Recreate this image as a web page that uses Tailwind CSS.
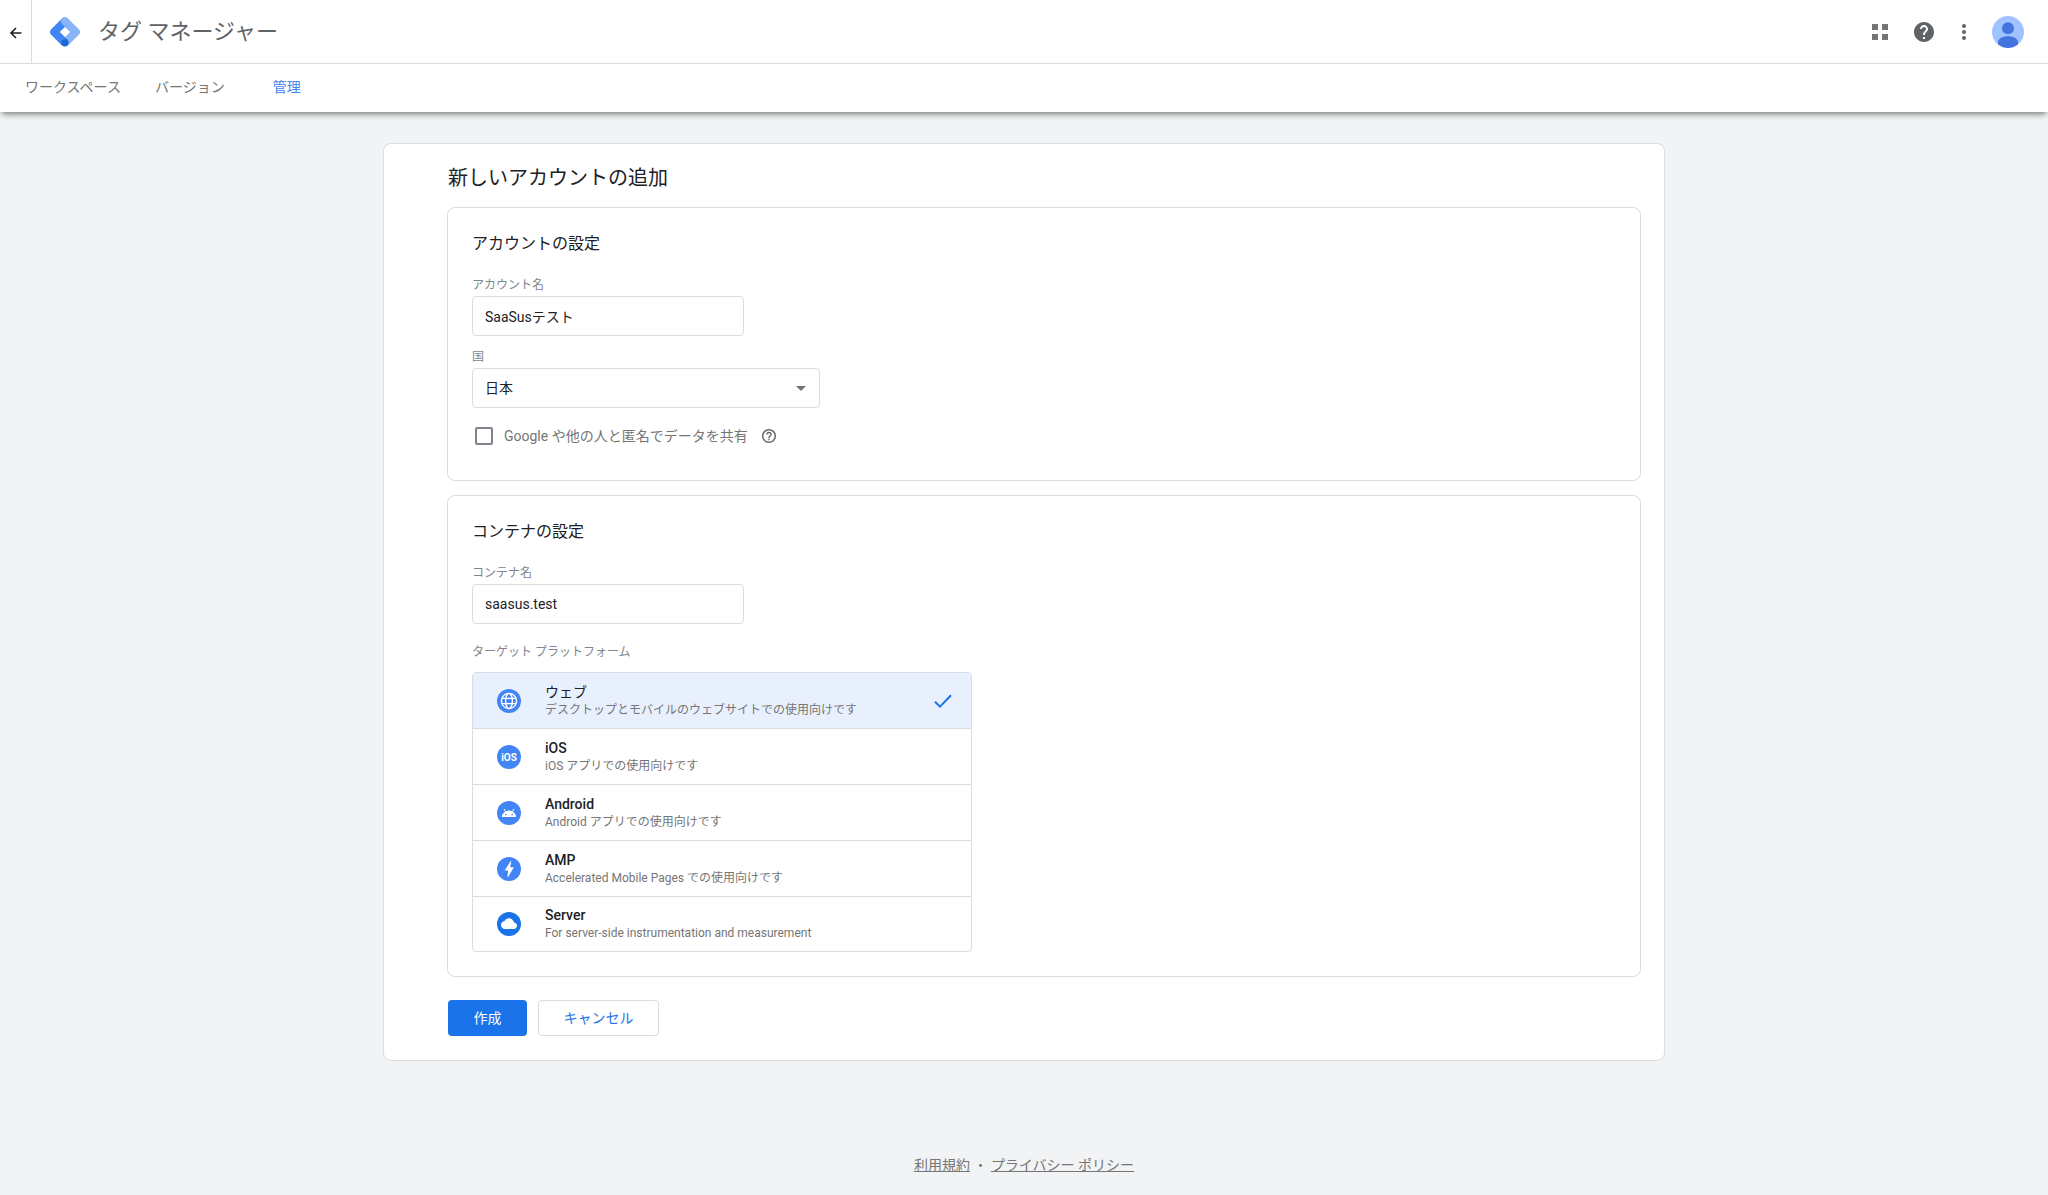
<!DOCTYPE html>
<html lang="ja">
<head>
<meta charset="utf-8">
<meta name="viewport" content="width=device-width, initial-scale=1">
<title>タグ マネージャー</title>
<script src="https://cdn.jsdelivr.net/npm/@tailwindcss/browser@4"></script>
</head>
<body class="flex min-h-screen flex-col bg-[#f1f3f4] font-['Roboto','Noto_Sans_CJK_JP',sans-serif] text-sm text-[#202124]">

<div class="relative bg-white shadow-[0_4px_6px_-2px_rgba(0,0,0,0.5)]">
  <header class="flex h-16 items-center border-b border-[#dadce0]">
    <button type="button" aria-label="戻る" class="flex h-full w-8 items-center justify-center border-r border-[#dadce0] pt-0.5">
      <svg class="size-4" viewBox="0 0 16 16" fill="none" stroke="#202124" stroke-width="1.6"><path d="M13.5 8H3.2M8 3 3 8l5 5"/></svg>
    </button>
    <a href="#" class="ml-[18px] flex items-center gap-[18px] text-[22px] leading-8 text-[#5f6368]">
      <svg class="size-[30px]" viewBox="0 0 30 30">
        <path fill="#8ab4f8" d="M12 1.4a4 4 0 0 1 5.8 0L28.8 12.2a4 4 0 0 1 0 5.6L18 28.6l-5.7-5.8L20.2 15 12 6.9z"/>
        <path fill="#4285f4" d="M12.2 1.2 1.2 12.2a4 4 0 0 0 0 5.6l10.9 10.9 5.6-5.9L9.8 15l8-7.8z"/>
        <path fill="#8ab4f8" d="M12 1.4a4 4 0 0 1 5.8 0l3 3-3 2.8-2.8 2.8-3-3.2a4 4 0 0 1 0-5.4z"/>
        <circle cx="15" cy="25.8" r="3.6" fill="#1967d2"/>
      </svg>
      <span>タグ マネージャー</span>
    </a>
    <div class="ml-auto flex items-center pr-6">
      <button type="button" aria-label="アプリ" class="mr-[26px]">
        <svg class="size-4" viewBox="0 0 16 16" fill="#757575"><path d="M0 0h6v6H0zM10 0h6v6h-6zM0 10h6v6H0zM10 10h6v6h-6z"/></svg>
      </button>
      <button type="button" aria-label="ヘルプ" class="mr-[18px]">
        <svg class="size-5" viewBox="2 2 20 20" fill="#5f6368"><path d="M12 2C6.480 2 2 6.480 2 12s4.480 10 10 10 10-4.480 10-10S17.520 2 12 2zm1 17h-2v-2h2v2zm2.070-7.750l-.9.920C13.450 12.900 13 13.500 13 15h-2v-.5c0-1.100.450-2.100 1.170-2.830l1.240-1.260c.370-.360.590-.860.590-1.410 0-1.100-.9-2-2-2s-2 .9-2 2H8c0-2.210 1.790-4 4-4s4 1.790 4 4c0 .880-.360 1.680-.930 2.250z"/></svg>
      </button>
      <button type="button" aria-label="その他" class="mr-4">
        <svg class="size-6" viewBox="0 0 24 24" fill="#5f6368"><circle cx="12" cy="6" r="2"/><circle cx="12" cy="12" r="2"/><circle cx="12" cy="18" r="2"/></svg>
      </button>
      <button type="button" aria-label="アカウント">
        <svg class="size-8" viewBox="0 0 32 32"><circle cx="16" cy="16" r="16" fill="#a0c3ff"/><circle cx="16" cy="12.300" r="6" fill="#4374e0"/><path fill="#4374e0" d="M6 28.500V26c0-3.500 4.500-5.800 10-5.800S26 22.500 26 26v2.500a16 16 0 0 1-20 0z"/></svg>
      </button>
    </div>
  </header>
  <nav class="flex h-12 items-center pb-0.5 pl-[25px] text-[#757575]">
    <a href="#">ワークスペース</a>
    <a href="#" class="ml-[34px]">バージョン</a>
    <a href="#" class="ml-12 text-[#4285f4]">管理</a>
  </nav>
</div>

<main class="w-full px-4 pt-[31px]">
  <form class="mx-auto max-w-[1282px] rounded-lg border border-[#dadce0] bg-white pt-[18px] pr-[23px] pb-6 pl-[63px]">
    <h1 class="pl-px text-xl leading-8">新しいアカウントの追加</h1>

    <section class="mt-[13px] rounded-lg border border-[#dadce0] px-6 pt-6 pb-8">
      <h2 class="text-base leading-6">アカウントの設定</h2>
      <label for="account" class="mt-[19px] block text-xs leading-5 text-[#80868b]">アカウント名</label>
      <input id="account" type="text" value="SaaSusテスト" class="mt-px block h-10 w-[272px] rounded border border-[#dadce0] px-3">
      <label for="country" class="mt-[11px] block text-xs leading-5 text-[#80868b]">国</label>
      <div class="relative mt-px w-[348px]">
        <select id="country" class="block h-10 w-full appearance-none rounded border border-[#dadce0] px-3"><option>日本</option></select>
        <svg class="pointer-events-none absolute top-[18px] right-3.5 h-[5px] w-2.5" viewBox="0 0 10 5" fill="#757575"><path d="M0 0h10L5 5z"/></svg>
      </div>
      <div class="mt-4 flex h-6 items-center pl-[3px] text-[#757575]">
        <input id="share" type="checkbox" class="size-[18px] appearance-none rounded-xs border-2 border-[#80868b]">
        <label for="share" class="ml-[11px]">Google や他の人と匿名でデータを共有</label>
        <button type="button" aria-label="共有に関するヘルプ" class="ml-3.5">
          <svg class="size-3.5" viewBox="2 2 20 20" fill="#616161"><path d="M11 18h2v-2h-2v2zm1-16C6.480 2 2 6.480 2 12s4.480 10 10 10 10-4.480 10-10S17.520 2 12 2zm0 18c-4.410 0-8-3.590-8-8s3.590-8 8-8 8 3.590 8 8-3.590 8-8 8zm0-14c-2.210 0-4 1.790-4 4h2c0-1.100.9-2 2-2s2 .9 2 2c0 2-3 1.750-3 5h2c0-2.250 3-2.500 3-5 0-2.210-1.790-4-4-4z"/></svg>
        </button>
      </div>
    </section>

    <section class="mt-3.5 rounded-lg border border-[#dadce0] px-6 pt-6 pb-6">
      <h2 class="text-base leading-6">コンテナの設定</h2>
      <label for="container" class="mt-[19px] block text-xs leading-5 text-[#80868b]">コンテナ名</label>
      <input id="container" type="text" value="saasus.test" class="mt-px block h-10 w-[272px] rounded border border-[#dadce0] px-3">
      <fieldset class="mt-[18px]">
        <legend class="text-xs leading-5 text-[#80868b]">ターゲット プラットフォーム</legend>
        <div class="mt-2.5 w-[500px] divide-y divide-[#dadce0] overflow-hidden rounded border border-[#dadce0]">
          <label class="relative flex h-14 items-center bg-[#e8f0fe] pr-[18px] pl-6">
            <input type="radio" name="platform" class="sr-only" checked>
            <svg class="size-6" viewBox="0 0 24 24" fill="none" stroke="#fff" stroke-width="1.400"><circle cx="12" cy="12" r="12" fill="#4285f4" stroke="none"/><circle cx="12" cy="12" r="7.600"/><ellipse cx="12" cy="12" rx="3.400" ry="7.600"/><path d="M5 9.400h14M5 14.600h14"/></svg>
            <span class="ml-6 flex-1"><span class="block leading-[18px]">ウェブ</span><span class="block text-xs leading-[18px] text-[#757575]">デスクトップとモバイルのウェブサイトでの使用向けです</span></span>
            <svg class="size-5" viewBox="0 0 20 20" fill="none" stroke="#1a73e8" stroke-width="2"><path d="M2 10.800 7 15.600 18 4.200"/></svg>
          </label>
          <label class="relative flex h-14 items-center pr-[18px] pl-6">
            <input type="radio" name="platform" class="sr-only">
            <svg class="size-6" viewBox="0 0 24 24"><circle cx="12" cy="12" r="12" fill="#4285f4"/><text x="12" y="15.800" text-anchor="middle" font-size="10" font-weight="700" fill="#fff">iOS</text></svg>
            <span class="ml-6 flex-1"><span class="block leading-[18px] font-medium">iOS</span><span class="block text-xs leading-[18px] text-[#757575]">iOS アプリでの使用向けです</span></span>
          </label>
          <label class="relative flex h-14 items-center pr-[18px] pl-6">
            <input type="radio" name="platform" class="sr-only">
            <svg class="size-6" viewBox="0 0 24 24"><circle cx="12" cy="12" r="12" fill="#4285f4"/><path fill="#fff" d="M5 16a7 6.400 0 0 1 14 0z"/><path stroke="#fff" stroke-width="1" stroke-linecap="round" d="m7.300 8.300 1.700 3M16.700 8.300l-1.700 3"/><circle cx="8.800" cy="13.600" r=".8" fill="#4285f4"/><circle cx="15.200" cy="13.600" r=".8" fill="#4285f4"/></svg>
            <span class="ml-6 flex-1"><span class="block leading-[18px] font-medium">Android</span><span class="block text-xs leading-[18px] text-[#757575]">Android アプリでの使用向けです</span></span>
          </label>
          <label class="relative flex h-14 items-center pr-[18px] pl-6">
            <input type="radio" name="platform" class="sr-only">
            <svg class="size-6" viewBox="0 0 24 24"><circle cx="12" cy="12" r="12" fill="#4285f4"/><path fill="#fff" d="M13.800 4 7.600 13.500h3.500L10.400 20h.8l5.600-9.700h-3.600L14.300 4z"/></svg>
            <span class="ml-6 flex-1"><span class="block leading-[18px] font-medium">AMP</span><span class="block text-xs leading-[18px] text-[#757575]">Accelerated Mobile Pages での使用向けです</span></span>
          </label>
          <label class="relative flex h-[54px] items-center pr-[18px] pl-6">
            <input type="radio" name="platform" class="sr-only">
            <svg class="size-6" viewBox="0 0 24 24"><circle cx="12" cy="12" r="12" fill="#1a73e8"/><path fill="#fff" transform="translate(4 3.700) scale(.667)" d="M19.350 10.040C18.670 6.590 15.640 4 12 4 9.110 4 6.600 5.640 5.350 8.040 2.340 8.360 0 10.910 0 14c0 3.310 2.690 6 6 6h13c2.760 0 5-2.240 5-5 0-2.640-2.050-4.780-4.650-4.960z"/></svg>
            <span class="ml-6 flex-1"><span class="block leading-[18px] font-medium">Server</span><span class="block text-xs leading-[18px] text-[#757575]">For server-side instrumentation and measurement</span></span>
          </label>
        </div>
      </fieldset>
    </section>

    <div class="mt-[23px] flex gap-[11px] pl-px">
      <button type="submit" class="h-9 min-w-[79px] rounded bg-[#1a73e8] px-6 text-white">作成</button>
      <button type="button" class="h-9 min-w-[121px] rounded border border-[#dadce0] px-6 text-[#1a73e8]">キャンセル</button>
    </div>
  </form>
</main>

<footer class="mt-auto pt-12 pb-5 text-center leading-5 text-[#757575]">
  <a href="#" class="underline">利用規約</a> ・ <a href="#" class="underline">プライバシー ポリシー</a>
</footer>
</body>
</html>
